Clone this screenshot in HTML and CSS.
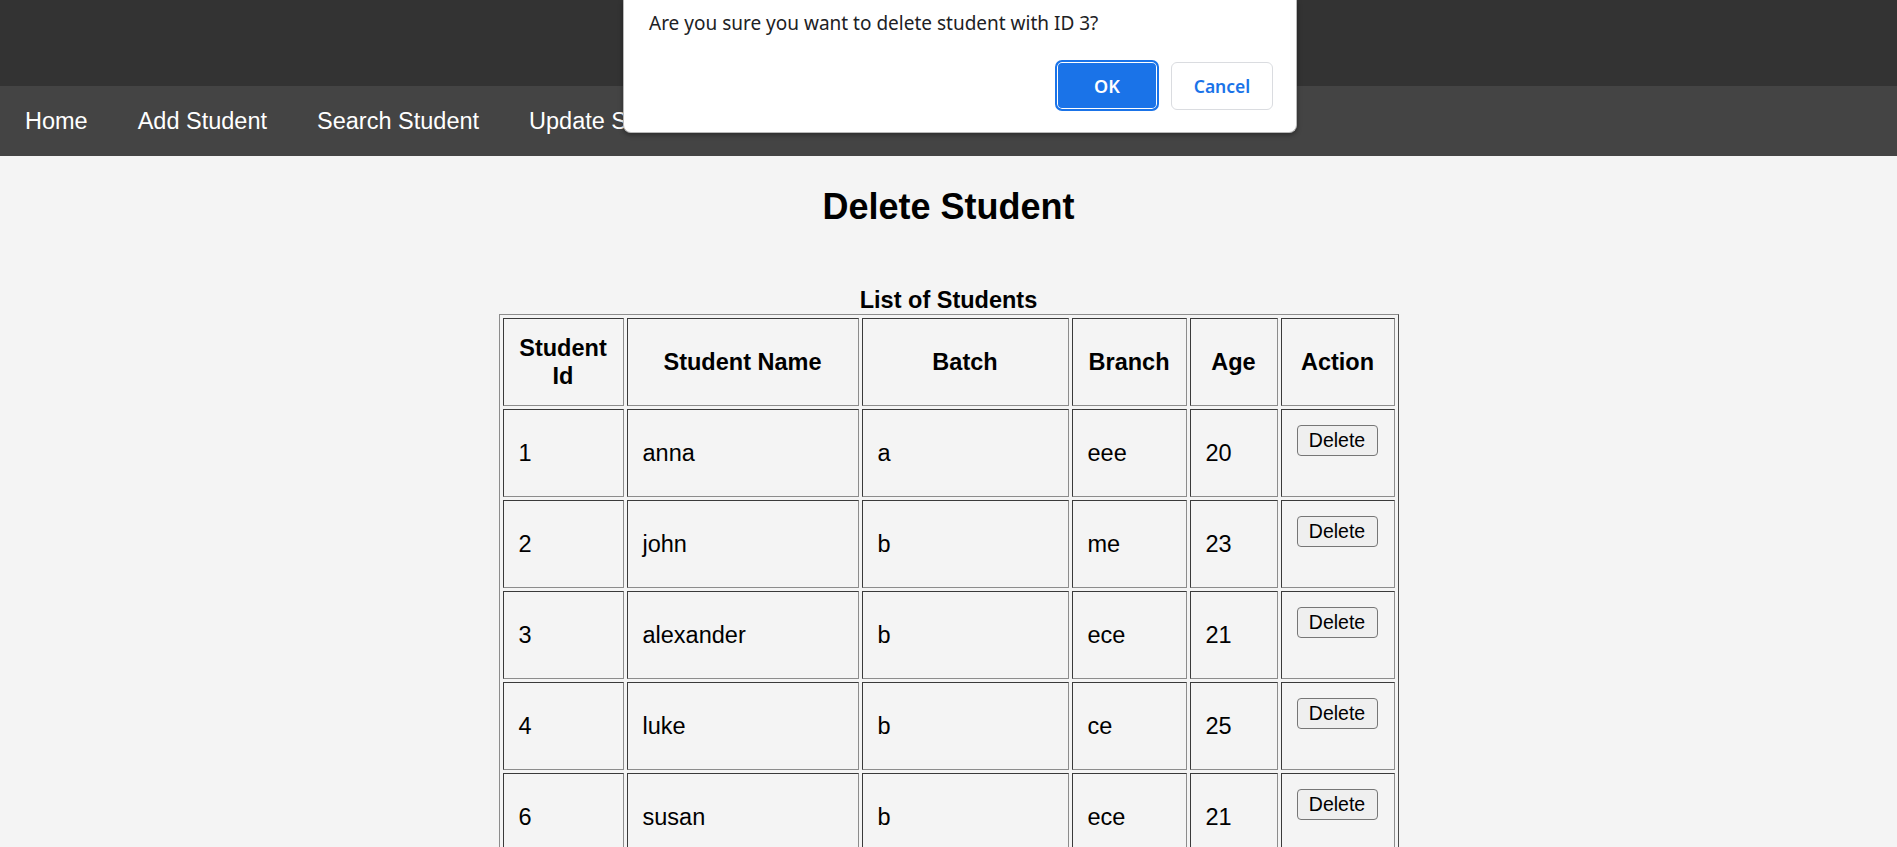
FILE: index.html
```html
<!DOCTYPE html>
<html lang="en">
<head>
<meta charset="utf-8">
<title>Delete Student</title>
<link rel="stylesheet" href="styles.css">
</head>
<body>
<header class="topbar"></header>
<nav class="nav">
  <a href="#">Home</a>
  <a href="#">Add Student</a>
  <a href="#">Search Student</a>
  <a href="#">Update Student</a>
  <a href="#">Delete Student</a>
  <a href="#">View Students</a>
</nav>
<main class="content">
  <h2 class="title">Delete Student</h2>
  <table class="students">
    <caption>List of Students</caption>
    <thead>
      <tr>
        <th class="c-id">Student Id</th>
        <th class="c-name">Student Name</th>
        <th class="c-batch">Batch</th>
        <th class="c-branch">Branch</th>
        <th class="c-age">Age</th>
        <th class="c-action">Action</th>
      </tr>
    </thead>
    <tbody>
      <tr><td>1</td><td>anna</td><td>a</td><td>eee</td><td>20</td><td class="act"><form class="del-form"><button type="button" class="del-btn">Delete</button></form></td></tr>
      <tr><td>2</td><td>john</td><td>b</td><td>me</td><td>23</td><td class="act"><form class="del-form"><button type="button" class="del-btn">Delete</button></form></td></tr>
      <tr><td>3</td><td>alexander</td><td>b</td><td>ece</td><td>21</td><td class="act"><form class="del-form"><button type="button" class="del-btn">Delete</button></form></td></tr>
      <tr><td>4</td><td>luke</td><td>b</td><td>ce</td><td>25</td><td class="act"><form class="del-form"><button type="button" class="del-btn">Delete</button></form></td></tr>
      <tr><td>6</td><td>susan</td><td>b</td><td>ece</td><td>21</td><td class="act"><form class="del-form"><button type="button" class="del-btn">Delete</button></form></td></tr>
    </tbody>
  </table>
</main>
<div class="dialog">
  <p class="dialog-msg">Are you sure you want to delete student with ID 3?</p>
  <div class="dialog-actions">
    <button type="button" class="btn-ok">OK</button>
    <button type="button" class="btn-cancel">Cancel</button>
  </div>
</div>
</body>
</html>
```

FILE: styles.css
```css
html, body {
  margin: 0;
  padding: 0;
}
body {
  background: #f4f4f4;
  font-family: "Liberation Sans", Arial, sans-serif;
  color: #000;
  overflow: hidden;
}
.topbar {
  height: 86px;
  background: #333333;
}
.nav {
  height: 70px;
  background: #444444;
  display: flex;
  align-items: center;
  white-space: nowrap;
  overflow: hidden;
}
.nav a {
  color: #fff;
  text-decoration: none;
  font-size: 23.5px;
  padding: 0 25px;
  line-height: 27px;
  margin-top: 1px;
}
.content {
  display: flex;
  flex-direction: column;
  align-items: center;
}
.title {
  margin: 30px 0 59px;
  font-size: 36px;
  line-height: 41px;
  font-weight: bold;
}
.students {
  width: 900px;
  table-layout: fixed;
  border-collapse: separate;
  border-spacing: 3px;
  border: 1px solid;
  border-color: #8c8c8c #4a4a4a #4a4a4a #8c8c8c;
}
.students caption {
  font-size: 23.5px;
  line-height: 28px;
  font-weight: bold;
}
.students th,
.students td {
  box-sizing: border-box;
  border: 1px solid;
  border-color: #3a3a3a #8c8c8c #8c8c8c #3a3a3a;
  padding: 15px;
  font-size: 23.5px;
  line-height: 28px;
}
.students th {
  font-weight: bold;
  text-align: center;
}
.students td {
  text-align: left;
  vertical-align: middle;
}
.c-id { width: 121px; }
.c-name { width: 232px; }
.c-batch { width: 207px; }
.c-branch { width: 115px; }
.c-age { width: 88px; }
.c-action { width: 114px; }
.students td.act {
  vertical-align: top;
}
.del-form {
  margin: 0 0 25px;
}
.del-btn {
  display: block;
  box-sizing: border-box;
  height: 31px;
  width: 81px;
  padding: 0;
  font-family: "Liberation Sans", Arial, sans-serif;
  font-size: 19.5px;
  line-height: 29px;
  color: #000;
  background: #efefef;
  border: 1px solid #767676;
  border-radius: 4px;
}
.dialog {
  position: absolute;
  left: 623px;
  top: 0;
  width: 674px;
  height: 133px;
  box-sizing: border-box;
  background: #fff;
  border: 1px solid #b9b9b9;
  border-top: none;
  border-radius: 0 0 8px 8px;
  box-shadow: 0 2px 5px rgba(0, 0, 0, 0.35);
  padding: 12px 23px 0 25px;
  font-family: "Noto Sans", "Open Sans", sans-serif;
}
.dialog-msg {
  margin: 0;
  font-size: 19px;
  line-height: 22px;
  color: #202124;
}
.dialog-actions {
  display: flex;
  justify-content: flex-end;
  align-items: center;
  gap: 12px;
  margin-top: 26px;
}
.btn-ok {
  box-sizing: border-box;
  width: 104px;
  height: 51px;
  background: #1a73e8;
  border: 2px solid #1a73e8;
  box-shadow: inset 0 0 0 1px #fff;
  border-radius: 7px;
  color: #fff;
  font-family: "Noto Sans", "Open Sans", sans-serif;
  font-size: 18px;
  font-weight: 600;
}
.btn-cancel {
  box-sizing: border-box;
  width: 102px;
  height: 48px;
  background: #fff;
  border: 1px solid #dadce0;
  border-radius: 6px;
  color: #1a73e8;
  font-family: "Noto Sans", "Open Sans", sans-serif;
  font-size: 17.5px;
  font-weight: 600;
}
```
